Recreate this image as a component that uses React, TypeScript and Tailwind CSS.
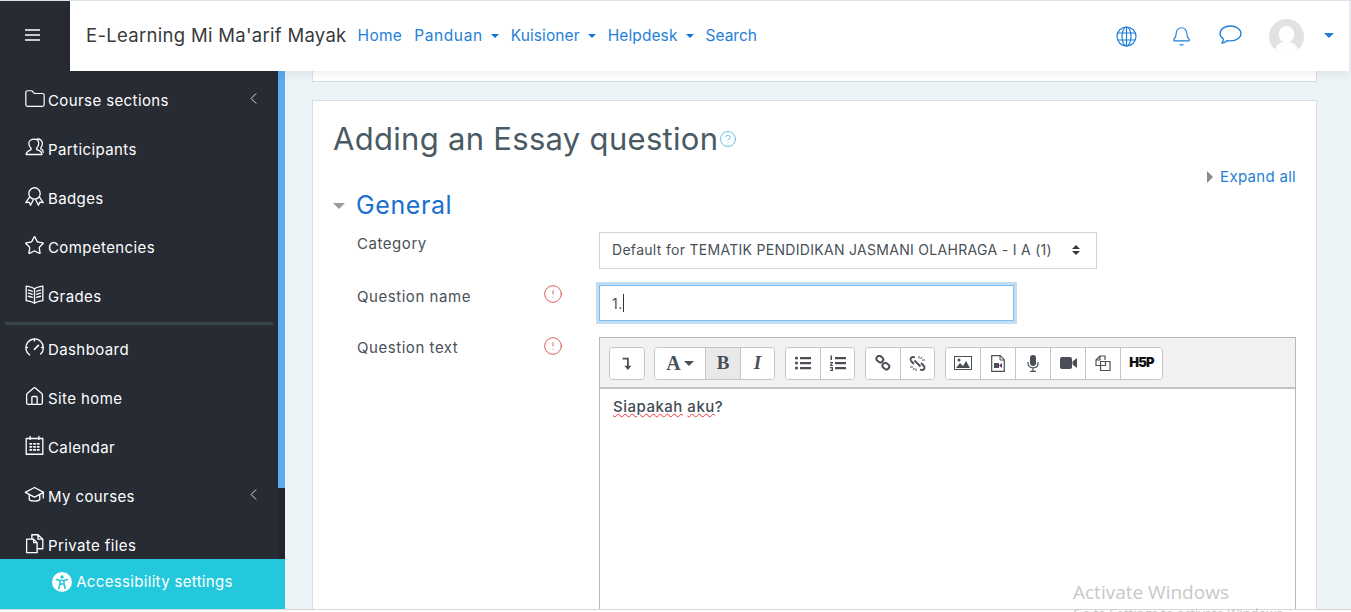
import { CircleAlert, CircleHelp, Bell, ChevronLeft, Folder, Star, Home } from "lucide-react";
import type { ReactNode } from "react";

function Line({ children, size = 21 }: { children: ReactNode; size?: number }) {
    return (
        <svg width={size} height={size} viewBox="0 0 24 24" fill="none" stroke="currentColor" strokeWidth="1.5" strokeLinecap="round" strokeLinejoin="round" className="-mt-1 shrink-0">
            {children}
        </svg>
    );
}

const FolderIcon = () => <Folder size={22} strokeWidth={1.3} className="-mt-1 shrink-0" />;
const StarIcon = () => <Star size={21} strokeWidth={1.5} className="-mt-1 shrink-0" />;
const HomeIcon = () => <Home size={21} strokeWidth={1.5} className="-mt-1 shrink-0" />;

const ParticipantsIcon = () => (
    <Line>
        <path d="M12 2.5c3 0 4.8 2.2 4.8 5 0 2.300-1 4.200-2.300 5.300v1.700c2 .8 6 1.500 6 5.500H2.500c0-3.500 3.500-4.500 5.500-5.500v-1.700C6.500 11.500 5.500 9.800 5.500 7.500c0-3 3-5 6.500-5z" />
        <path d="M15 2.500c3-.8 6 1.500 6 5 0 2-.7 3.500-1.800 4.700v1.300c1 .5 2.800 1 2.800 4" />
    </Line>
);
const BadgeIcon = () => (
    <Line>
        <circle cx="12" cy="8.500" r="6.500" />
        <path d="M6.500 12.500 2 19l4-.5 1.500 3.500 3-6M17.500 12.500 22 19l-4-.5-1.500 3.500-3-6" />
    </Line>
);
const GradesIcon = () => (
    <Line>
        <path d="M12 5.500C9.500 3.500 6 3 2.500 2.500v16.500C6 19.500 9.500 20 12 22c2.500-2 6-2.500 9.500-3V2.500C18 3 14.500 3.500 12 5.500zM12 5.500V22" />
        <path d="M5 7c1.500.2 3 .6 4.500 1.300M5 10.500c1.500.2 3 .6 4.500 1.300M5 14c1.500.2 3 .6 4.500 1.300M19 7c-1.500.2-3 .6-4.500 1.300M19 10.500c-1.500.2-3 .6-4.500 1.300M19 14c-1.500.2-3 .6-4.500 1.300" />
    </Line>
);
const GaugeIcon = () => (
    <Line>
        <path d="M6.500 20.500A10 10 0 1 1 19 19.500" strokeDasharray="0" />
        <path d="M12 14l4.500-4.500" strokeWidth="2" />
        <path d="M12 2.500v2M4 12H2.500M21.500 12H20" />
    </Line>
);
const CalendarIcon = () => (
    <Line>
        <rect x="2.500" y="4" width="19" height="18" />
        <path d="M7 1.500V5M17 1.500V5" />
        <path d="M7 10h1.500M11.300 10h1.500M15.500 10H17M7 13.500h1.500M11.300 13.500h1.500M15.500 13.500H17M7 17h1.500M11.300 17h1.500M15.500 17H17" strokeWidth="2" />
    </Line>
);
const CapIcon = () => (
    <Line>
        <path d="M12 4 1.500 9.500 12 15l10.500-5.500L12 4z" />
        <path d="M6 12v6c2 2 10 2 12 0v-6M22 10v6" />
    </Line>
);
const FilesIcon = () => (
    <Line>
        <path d="M3 7h8l4 4v11.500H3V7zM11 7v4h4" />
        <path d="M9 7V2h7l5.500 5v11H15M16 2v5h5.500" />
    </Line>
);

const topItems = [
    { label: "Course sections", icon: <FolderIcon />, arrow: true },
    { label: "Participants", icon: <ParticipantsIcon /> },
    { label: "Badges", icon: <BadgeIcon /> },
    { label: "Competencies", icon: <StarIcon /> },
    { label: "Grades", icon: <GradesIcon /> },
];

const bottomItems = [
    { label: "Dashboard", icon: <GaugeIcon /> },
    { label: "Site home", icon: <HomeIcon /> },
    { label: "Calendar", icon: <CalendarIcon /> },
    { label: "My courses", icon: <CapIcon />, arrow: true },
    { label: "Private files", icon: <FilesIcon /> },
];

function SideItem({ label, icon, arrow }: { label: string; icon: ReactNode; arrow?: boolean }) {
    return (
        <div className="h-[49px] flex items-center pl-[24px] pr-[15px] text-white text-[15px] tracking-[0.4px]">
            <span className="w-[24px] shrink-0 flex">{icon}</span>
            <span className="mt-[1px]">{label}</span>
            {arrow && <ChevronLeft size={19} strokeWidth={1.2} className="ml-auto -mt-1 text-gray-200" />}
        </div>
    );
}

function ToolBtn({ children, active, w = "w-[35px]" }: { children: ReactNode; active?: boolean; w?: string }) {
    return (
        <div
            className={`h-[31px] ${w} flex items-center justify-center border-r border-[#c4c4c4] last:border-r-0 text-[#4a4f57] ${
                active ? "bg-[#e9e9e9]" : "bg-white"
            }`}
        >
            {children}
        </div>
    );
}

function ToolGroup({ children }: { children: ReactNode }) {
    return <div className="flex border border-[#c4c4c4] rounded-[4px] overflow-hidden bg-white">{children}</div>;
}

function Glyph({ children, size = 18 }: { children: ReactNode; size?: number }) {
    return (
        <svg width={size} height={size} viewBox="0 0 18 18" fill="currentColor">
            {children}
        </svg>
    );
}

function Required() {
    return <CircleAlert size={20} strokeWidth={1.1} className="text-[#d9534f] -mt-[1px] -ml-[2px]" />;
}

function Caret() {
    return <span className="inline-block w-0 h-0 border-x-[4px] border-x-transparent border-t-[4px] border-t-[#1177d1] ml-[8px] mb-[3px]" />;
}

export default function App() {
    return (
        <div className="relative h-[612px] w-[1351px] overflow-hidden bg-[#edf4f8] font-['Inter',sans-serif] border-t border-[#dee2e6]">
            <header className="flex h-[70px] relative z-10">
                <div className="w-[70px] bg-[#272b34] flex items-center justify-center text-white pr-[6px]">
                    <svg width="15" height="12" viewBox="0 0 15 12" fill="none" stroke="currentColor" strokeWidth="1.500" className="-mt-[2px]">
                        <path d="M0 1h15M0 6h15M0 11h15" />
                    </svg>
                </div>
                <div className="flex-1 bg-white flex items-center shadow-[0_2px_10px_rgba(0,0,0,0.08)] mr-[2px]">
                    <span className="ml-[16px] text-[18.5px] tracking-[0.3px] text-[#373a3c]">E-Learning Mi Ma'arif Mayak</span>
                    <nav className="flex items-center text-[15.5px] text-[#1f7fd8] ml-[11px] gap-[12px]">
                        <span className="tracking-[0.3px]">Home</span>
                        <span className="tracking-[0.6px]">Panduan<Caret /></span>
                        <span className="tracking-[0.1px]">Kuisioner<Caret /></span>
                        <span className="tracking-[0.1px]">Helpdesk<Caret /></span>
                        <span>Search</span>
                    </nav>
                    <div className="ml-auto flex items-center text-[#1f7fd8] mr-[15px]">
                        <svg width="21" height="21" viewBox="0 0 21 21" fill="none" stroke="currentColor" strokeWidth="1.200">
                            <circle cx="10.500" cy="10.500" r="9.500" />
                            <ellipse cx="10.500" cy="10.500" rx="4.500" ry="9.500" />
                            <path d="M10.500 1v19M1.800 7h17.400M1.800 14h17.400" />
                        </svg>
                        <Bell size={21} strokeWidth={1.3} className="ml-[34px]" />
                        <svg width="23" height="20" viewBox="0 0 23 20" fill="none" stroke="currentColor" strokeWidth="1.300" className="ml-[27px] -mt-[3px]">
                            <path d="M11.500 1C5.800 1 1 4.200 1 8.500c0 2.300 1.400 4.200 3.500 5.500-.2 1.500-.8 2.800-1.500 4 2 0 3.800-1 5.300-2.400 1 .2 2 .3 3.200.3 5.700 0 10.500-3.200 10.500-7.400S17.200 1 11.500 1z" />
                        </svg>
                        <div className="ml-[27px] w-[35px] h-[35px] rounded-full bg-[#e2e2e2] overflow-hidden relative">
                            <div className="absolute left-[10px] top-[7px] w-[15px] h-[17px] rounded-full bg-white" />
                            <div className="absolute left-[6px] top-[23px] w-[23px] h-[18px] rounded-full bg-white" />
                        </div>
                        <span className="ml-[20px] w-0 h-0 border-x-[5px] border-x-transparent border-t-[5px] border-t-[#1f7fd8] -mt-[2px]" />
                    </div>
                </div>
            </header>

            <div className="flex h-[538px]">
                <aside className="w-[285px] relative bg-[#272b34] flex flex-col">
                    <div className="flex-1 flex">
                        <div className="w-[278px]">
                            <div className="pt-[5px]">
                                {topItems.map((item) => (
                                    <SideItem key={item.label} {...item} />
                                ))}
                            </div>
                            <div className="h-[3px] bg-[#37444a] ml-[5px] mr-[5px] mt-[1px]" />
                            {bottomItems.map((item) => (
                                <SideItem key={item.label} {...item} />
                            ))}
                        </div>
                        <div className="w-[7px] bg-[#22252c]">
                            <div className="h-[417px] bg-[#5babf0]" />
                        </div>
                    </div>
                    <div className="absolute left-0 right-0 bottom-0 h-[50px] pb-[3px] bg-[#24c8dc] text-white text-[15px] tracking-[0.33px] flex items-center justify-center">
                        <svg width="20" height="20" viewBox="0 0 20 20" className="mr-[4px] -mt-[1px]">
                            <circle cx="10" cy="10" r="10" fill="white" />
                            <circle cx="10" cy="5" r="1.700" fill="#24c8dc" />
                            <path d="M4.500 7.500 8 8.500v3.500L6.800 16.500M15.500 7.500 12 8.500v3.500l1.200 4.500M8 8.500h4M8 12h4" fill="none" stroke="#24c8dc" strokeWidth="1.600" strokeLinecap="round" />
                        </svg>
                        Accessibility settings
                    </div>
                </aside>

                <main className="flex-1 min-w-0 pl-[27px] pr-[34px]">
                    <div className="h-[11px] bg-white border border-t-0 border-[#d5dfe5]" />
                    <section className="mt-[18px] h-[520px] bg-white border border-[#d5dfe5] pl-[21px] pr-[20px]">
                        <div className="flex items-center pt-[18px] -ml-px">
                            <h1 className="text-[31px] leading-[40px] tracking-[0.3px] text-[#495a64]">Adding an Essay question</h1>
                            <CircleHelp size={18} strokeWidth={1.2} className="text-[#5fb4e6] ml-[1px]" />
                        </div>
                        <div className="flex items-center justify-end text-[15px] tracking-[0.3px] text-[#1f7fd8] mt-[8px] h-[20px]">
                            <span className="w-0 h-0 border-y-[6px] border-y-transparent border-l-[6px] border-l-[#8a8a8a] mr-[7px]" />
                            Expand all
                        </div>
                        <div className="flex items-center mt-[4px] h-[30px] -ml-px">
                            <span className="w-0 h-0 border-x-[6px] border-x-transparent border-t-[6px] border-t-[#9a9a9a] mr-[11px]" />
                            <h2 className="text-[25px] tracking-[0.6px] text-[#1a6fd0]">General</h2>
                        </div>

                        <div className="flex mt-[11px] h-[37px] text-[15px] tracking-[0.55px] text-[#495057]">
                            <div className="w-[265px] pl-[23px] pt-px">Category</div>
                            <div className="w-[498px] h-[37px] border border-[#ced4da] flex items-center pl-[12px] pr-[16px] pb-[2px] text-[14px] tracking-[0.3px] whitespace-nowrap">
                                <span className="flex-1">Default for TEMATIK PENDIDIKAN JASMANI OLAHRAGA - I A (1)</span>
                                <span className="flex flex-col gap-[2px]">
                                    <span className="w-0 h-0 border-x-[4px] border-x-transparent border-b-[4px] border-b-[#343a40]" />
                                    <span className="w-0 h-0 border-x-[4px] border-x-transparent border-t-[4px] border-t-[#343a40]" />
                                </span>
                            </div>
                        </div>

                        <div className="flex mt-[16px] h-[36px] text-[15px] tracking-[0.55px] text-[#495057]">
                            <div className="w-[265px] pl-[23px] flex items-start">
                                <span className="w-[188px] mt-px">Question name</span>
                                <Required />
                            </div>
                            <div className="w-[415px] h-[36px] border border-[#7fbdf0] shadow-[0_0_0_3px_#c3ddf3] flex items-center pl-[12px] text-[14px]">
                                1.<span className="w-px h-[18px] bg-[#333]" />
                            </div>
                        </div>

                        <div className="flex mt-[16px] text-[15px] tracking-[0.55px] text-[#495057]">
                            <div className="w-[265px] pl-[23px] flex items-start">
                                <span className="w-[188px]">Question text</span>
                                <Required />
                            </div>
                            <div className="w-[697px] h-[280px] border border-[#b8b8b8]">
                                <div className="h-[51px] bg-[#f2f2f2] border-b-2 border-[#c0c4c8] flex items-center gap-[10px] pl-[9px] pt-[1px] tracking-normal">
                                    <div className="mr-[-1px]">
                                        <ToolGroup>
                                            <ToolBtn w="w-[34px]">
                                                <Glyph size={16}>
                                                    <path d="M4 3h7v9h3l-4 5-4-5h3V5H4z" />
                                                </Glyph>
                                            </ToolBtn>
                                        </ToolGroup>
                                    </div>
                                    <ToolGroup>
                                        <ToolBtn w="w-[51px]">
                                            <span className="font-['Liberation_Serif',serif] font-bold text-[20px]">A</span>
                                            <span className="ml-[3px] w-0 h-0 border-x-[5px] border-x-transparent border-t-[5px] border-t-[#4a4f57]" />
                                        </ToolBtn>
                                        <ToolBtn active><span className="font-['Liberation_Serif',serif] font-bold text-[19px]">B</span></ToolBtn>
                                        <ToolBtn w="w-[33px]"><span className="font-['Liberation_Serif',serif] italic font-bold text-[19px]">I</span></ToolBtn>
                                    </ToolGroup>
                                    <ToolGroup>
                                        <ToolBtn>
                                            <Glyph>
                                                <path d="M6 3h11v2.200H6zM6 8h11v2.200H6zM6 13h11v2.200H6z" />
                                                <circle cx="2.500" cy="4" r="1.600" />
                                                <circle cx="2.500" cy="9" r="1.600" />
                                                <circle cx="2.500" cy="14" r="1.600" />
                                            </Glyph>
                                        </ToolBtn>
                                        <ToolBtn w="w-[33px]">
                                            <Glyph>
                                                <path d="M6 3h11v2.200H6zM6 8h11v2.200H6zM6 13h11v2.200H6z" />
                                                <path d="M1.500 1.500h1.500v4.500H1.500zM1 8h3v1L2.500 11H4v1H1v-1l1.500-2H1zM1 13h3v4H1v-1h2v-.500H1.500v-1H3V14H1z" />
                                            </Glyph>
                                        </ToolBtn>
                                    </ToolGroup>
                                    <ToolGroup>
                                        <ToolBtn>
                                            <svg width="16" height="16" viewBox="0 0 16 16" fill="none" stroke="currentColor" strokeWidth="2">
                                                <rect x="1.500" y="1.500" width="7" height="5.500" rx="2.700" transform="rotate(40 5 4)" />
                                                <rect x="7.500" y="8.500" width="7" height="5.500" rx="2.700" transform="rotate(40 11 11)" />
                                            </svg>
                                        </ToolBtn>
                                        <ToolBtn w="w-[33px]">
                                            <svg width="17" height="17" viewBox="0 0 17 17" fill="none" stroke="currentColor" strokeWidth="1.800">
                                                <path d="M6 2.500 4 2C2.500 2 1.500 3 1.500 4.500c0 1 .5 1.500 1 2L5 9M11 14.500l2 .5c1.500 0 2.500-1 2.500-2.500 0-1-.5-1.500-1-2L12 8M5.500 5.500l6 6" />
                                                <path d="M10 1v2.500M13 2l-1.500 2M16 5h-3M1 12h3M4 15l1.500-2M7 16v-2.500" strokeWidth="1" />
                                            </svg>
                                        </ToolBtn>
                                    </ToolGroup>
                                    <ToolGroup>
                                        <ToolBtn>
                                            <svg width="18" height="14" viewBox="0 0 18 14">
                                                <rect x="0.500" y="0.500" width="17" height="13" fill="#fff" stroke="#4a4f57" />
                                                <path d="M2 12l4-5 3 3 3-5 4 7z" fill="#4a4f57" />
                                                <circle cx="5" cy="4" r="1.500" fill="#4a4f57" />
                                            </svg>
                                        </ToolBtn>
                                        <ToolBtn>
                                            <svg width="14" height="17" viewBox="0 0 14 17">
                                                <path d="M.700.700h8.600l4 4v11.600H.700z" fill="#fff" stroke="#4a4f57" strokeWidth="1.200" />
                                                <path d="M9 1v4h4" fill="none" stroke="#4a4f57" />
                                                <rect x="3" y="8" width="5" height="5" fill="#4a4f57" />
                                                <path d="M8 10.500 11 8v5z" fill="#7a2b6b" />
                                            </svg>
                                        </ToolBtn>
                                        <ToolBtn>
                                            <svg width="12" height="17" viewBox="0 0 12 17" fill="currentColor">
                                                <rect x="3" y="0" width="6" height="11" rx="3" />
                                                <path d="M1 7v1.500C1 11 3 12.800 6 12.800s5-1.800 5-4.300V7M6 13v3M3 16.300h6" fill="none" stroke="currentColor" strokeWidth="1.200" />
                                            </svg>
                                        </ToolBtn>
                                        <ToolBtn>
                                            <svg width="17" height="12" viewBox="0 0 17 12" fill="currentColor">
                                                <rect x="0" y="0" width="12" height="12" rx="2" />
                                                <path d="M12.500 4.500 17 1v10l-4.500-3.500z" />
                                            </svg>
                                        </ToolBtn>
                                        <ToolBtn>
                                            <svg width="16" height="16" viewBox="0 0 16 16" fill="none" stroke="currentColor" strokeWidth="1.200">
                                                <path d="M5 10.500H1V5l4-4h5v4M1 5h4V1" />
                                                <path d="M5.500 6.500h5l4.500 0v9H5.500zM10.500 6.500v4h-5" />
                                            </svg>
                                        </ToolBtn>
                                        <ToolBtn w="w-[41px]">
                                            <span className="font-black text-[13px] tracking-[-0.8px] text-[#111]">H5P</span>
                                        </ToolBtn>
                                    </ToolGroup>
                                </div>
                                <div className="pl-[13px] pt-[7px] text-[15px] font-medium tracking-[0.5px] text-[#434b55]">
                                    <span className="underline decoration-wavy decoration-red-500 decoration-1">Siapakah</span>{" "}
                                    <span className="underline decoration-wavy decoration-red-500 decoration-1">aku</span>?
                                </div>
                            </div>
                        </div>
                    </section>
                </main>
            </div>

            <div className="absolute left-0 right-0 bottom-0 h-[3px] bg-white border-t border-[#d4d6d8]" />
            <div className="absolute left-[1073px] top-[579px] font-['Open_Sans',sans-serif] text-[19px] text-[#c8c8c8] leading-[24px]">
                Activate Windows
                <div className="text-[13px] leading-[18px]">Go to Settings to activate Windows.</div>
            </div>
        </div>
    );
}
